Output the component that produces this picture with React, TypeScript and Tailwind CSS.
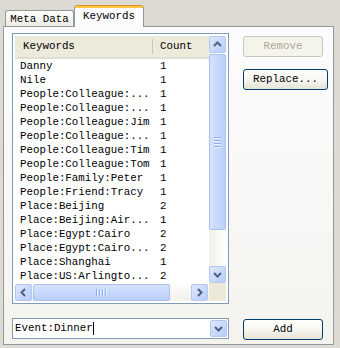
import React from "react";

const rows: [string, string][] = [
  ["Danny", "1"],
  ["Nile", "1"],
  ["People:Colleague:...", "1"],
  ["People:Colleague:...", "1"],
  ["People:Colleague:Jim", "1"],
  ["People:Colleague:...", "1"],
  ["People:Colleague:Tim", "1"],
  ["People:Colleague:Tom", "1"],
  ["People:Family:Peter", "1"],
  ["People:Friend:Tracy", "1"],
  ["Place:Beijing", "2"],
  ["Place:Beijing:Air...", "1"],
  ["Place:Egypt:Cairo", "2"],
  ["Place:Egypt:Cairo...", "2"],
  ["Place:Shanghai", "1"],
  ["Place:US:Arlingto...", "2"],
];

function Chevron({ dir }: { dir: "up" | "down" | "left" | "right" }) {
  const pts = {
    up: "1,6 4.5,2.5 8,6",
    down: "1,3 4.5,6.5 8,3",
    left: "6,1 2.5,4.5 6,8",
    right: "3,1 6.5,4.5 3,8",
  }[dir];
  return (
    <svg width="9" height="9" viewBox="0 0 9 9">
      <polyline points={pts} fill="none" stroke="#4d6185" strokeWidth="2" />
    </svg>
  );
}

function ScrollBtn({ dir, className = "" }: { dir: "up" | "down" | "left" | "right"; className?: string }) {
  return (
    <div className={`w-[17px] h-[17px] shrink-0 rounded-[2px] border border-[#b3c7f2] bg-gradient-to-br from-[#dde7fd] to-[#b8cdfa] flex items-center justify-center ${className}`}>
      <Chevron dir={dir} />
    </div>
  );
}

export default function App() {
  return (
    <div className="w-[340px] h-[348px] bg-[#dcdad2] pl-[3px] pr-[6px] pb-[3px] flex flex-col font-['Liberation_Mono',monospace] text-[10.8px] text-black overflow-hidden">
      {/* tabs */}
      <div className="h-[26px] pt-[5px] pl-[2px] flex items-end">
        <div className="w-[69px] h-[16px] border border-b-0 border-[#919b9c] rounded-t-[3px] bg-gradient-to-b from-white to-[#ecebe5] flex items-center justify-center leading-none pt-px">
          Meta Data
        </div>
        <div className="w-[70px] h-[22px] -mb-px relative z-10 border-x border-[#919b9c] rounded-t-[3px] bg-[#fcfcfe] flex flex-col overflow-hidden">
          <div className="h-px bg-[#e68b2c]" />
          <div className="h-[2px] bg-[#ffc73c]" />
          <div className="flex-1 flex items-center justify-center leading-none pb-[3px]">Keywords</div>
        </div>
      </div>

      {/* panel */}
      <div className="flex-1 border border-[#919b9c] bg-gradient-to-b from-[#fcfcfe] to-[#f4f3ee] pl-[8px] pt-[6px] flex">
        <div className="w-[217px] flex flex-col">
          {/* list box */}
          <div className="h-[271px] border border-[#7f9db9] bg-white pt-[2px] pl-[2px] pr-px pb-[2px] flex">
            <div className="w-[194px] flex flex-col">
              <div className="h-[23px] shrink-0 bg-[#ebeadb] border-b-[2px] border-[#e2dfd0] flex items-center">
                <div className="w-[137px] pl-[8px]">Keywords</div>
                <div className="w-px h-[15px] bg-[#cbc7b8]" />
                <div className="pl-[7px]">Count</div>
              </div>
              <div className="flex-1 flex flex-col overflow-hidden">
                {rows.map(([k, c], i) => (
                  <div key={i} className="h-[14px] shrink-0 flex items-center leading-[14px] whitespace-nowrap">
                    <div className="w-[137px] pl-[5px] overflow-hidden">{k}</div>
                    <div className="pl-[8px]">{c}</div>
                  </div>
                ))}
              </div>
              {/* horizontal scrollbar */}
              <div className="h-[18px] shrink-0 bg-gradient-to-b from-[#fefefb] to-[#f1f0ea] flex items-center">
                <ScrollBtn dir="left" />
                <div className="ml-px w-[137px] h-[17px] rounded-[2px] border border-[#a9c0f1] bg-gradient-to-b from-[#d6e2fd] to-[#bcd0fb] flex items-center justify-center gap-[1px]">
                  {[0, 1, 2, 3].map((g) => (
                    <div key={g} className="w-[2px] h-[7px] border-l border-[#8cb0f8] bg-[#eef4fe]" />
                  ))}
                </div>
                <div className="flex-1" />
                <ScrollBtn dir="right" className="mr-px" />
              </div>
            </div>
            {/* vertical scrollbar */}
            <div className="w-[17px] flex flex-col bg-gradient-to-r from-[#f3f1ec] to-[#fefefb]">
              <ScrollBtn dir="up" />
              <div className="mt-px h-[176px] rounded-[2px] border border-[#a9c0f1] bg-gradient-to-r from-[#d6e2fd] to-[#bcd0fb] flex flex-col items-center justify-center gap-[1px]">
                {[0, 1, 2, 3].map((g) => (
                  <div key={g} className="h-[2px] w-[7px] border-t border-[#8cb0f8] bg-[#eef4fe]" />
                ))}
              </div>
              <div className="flex-1" />
              <ScrollBtn dir="down" />
              <div className="h-[18px] shrink-0 bg-[#ece9d8]" />
            </div>
          </div>

          {/* combo */}
          <div className="mt-[14px] h-[21px] border border-[#7f9db9] bg-white flex items-center">
            <div className="flex-1 pl-[2px] flex items-center whitespace-nowrap">
              Event:Dinner
              <span className="inline-block w-px h-[13px] bg-black" />
            </div>
            <ScrollBtn dir="down" className="mr-px" />
          </div>
        </div>

        <div className="ml-[14px] pb-[4px] flex flex-col">
          <div className="mt-[3px] w-[80px] h-[21px] rounded-[3px] border border-[#c9c7ba] bg-[#f5f4ea] text-[#aca899] flex items-center justify-center">
            Remove
          </div>
          <div className="mt-[12px] w-[85px] h-[21px] rounded-[3px] border border-[#003c74] bg-gradient-to-b from-white via-[#f7f6f1] to-[#e6e3d6] flex items-center justify-center">
            Replace...
          </div>
          <div className="mt-auto w-[80px] h-[21px] rounded-[3px] border border-[#003c74] bg-gradient-to-b from-white via-[#f7f6f1] to-[#e6e3d6] flex items-center justify-center">
            Add
          </div>
        </div>
      </div>
    </div>
  );
}
